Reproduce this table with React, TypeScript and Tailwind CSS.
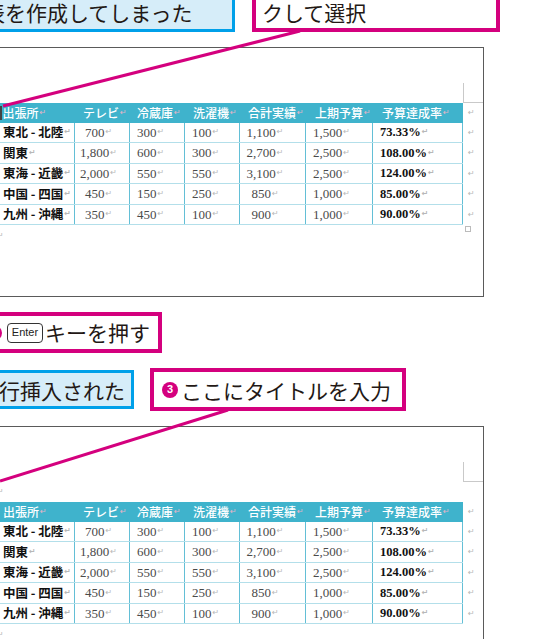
import React from "react";

const headers = ["出張所", "テレビ", "冷蔵庫", "洗濯機", "合計実績", "上期予算", "予算達成率"];
const rows = [
  ["東北 - 北陸", "700", "300", "100", "1,100", "1,500", "73.33%"],
  ["関東", "1,800", "600", "300", "2,700", "2,500", "108.00%"],
  ["東海 - 近畿", "2,000", "550", "550", "3,100", "2,500", "124.00%"],
  ["中国 - 四国", "450", "150", "250", "850", "1,000", "85.00%"],
  ["九州 - 沖縄", "350", "450", "100", "900", "1,000", "90.00%"],
];

const widths = ["w-[78px]", "w-[55px]", "w-[55px]", "w-[55px]", "w-[66px]", "w-[67px]", "w-[90px]"];
const headPad = ["pl-[6px]", "pl-[8px]", "pl-[7px]", "pl-[8px]", "pl-[8px]", "pl-[9px]", "pl-[9px]"];
const bodyPad = [
  "pl-[6px]",
  "justify-center pr-[7px]",
  "pl-[7px]",
  "pl-[7px]",
  "justify-center pr-[15px]",
  "pl-[7px]",
  "pl-[7px]",
];

function Mark({ head }: { head?: boolean }) {
  return (
    <span
      className={
        "font-['DejaVu_Sans',sans-serif] text-[8px] leading-none ml-[1px] " +
        (head ? "text-[#e6b3c6]" : "text-[#b8b8b8]")
      }
    >
      ↵
    </span>
  );
}

function Table({ cursor, handle }: { cursor?: boolean; handle?: boolean }) {
  return (
    <div className="flex flex-col">
      <div className="flex h-[20px]">
        <div className="flex w-[466px] bg-[#3fb3cc]">
          {headers.map((h, i) => (
            <div
              key={i}
              className={`${widths[i]} ${headPad[i]} flex items-center text-white text-[12px] font-medium font-['Noto_Sans_CJK_JP',sans-serif] leading-none`}
            >
              {i === 0 && cursor && <span className="inline-block w-[1.5px] h-[14px] bg-[#444] mr-[1px] -ml-[3px]" />}
              {h}
              <Mark head />
            </div>
          ))}
        </div>
        <div className="flex items-center pl-[4px]">
          <Mark />
        </div>
      </div>
      {rows.map((r, ri) => (
        <div key={ri} className="flex h-[20.5px]">
          <div className="flex w-[466px] border-b border-[#b3dfea]">
            {r.map((c, i) => (
              <div
                key={i}
                className={`${widths[i]} ${bodyPad[i]} flex items-center border-r-[1.5px] border-[#63bfd6] leading-none ${
                  i === 0
                    ? "font-['Noto_Sans_CJK_JP',sans-serif] font-bold text-[12.5px] text-[#111]"
                    : i === 6
                    ? "font-['Liberation_Serif',serif] font-bold text-[12.5px] text-[#111]"
                    : "font-['Liberation_Serif',serif] text-[13px] text-[#4a4a4a]"
                }`}
              >
                {c}
                <Mark />
              </div>
            ))}
          </div>
          <div className="flex items-center pl-[4px]">
            <Mark />
          </div>
        </div>
      ))}
      <div className="flex h-[14px] items-center">
        <div className="-ml-[1px] w-[469px]">
          <Mark />
        </div>
        {handle && <div className="w-[6px] h-[6px] border border-[#bbb] -mt-[6px]" />}
      </div>
    </div>
  );
}

function Doc({ title, cursor, handle, h }: { title?: boolean; cursor?: boolean; handle?: boolean; h: string }) {
  return (
    <div className={`ml-[-3px] w-[486.5px] ${h} border-t-[1.5px] border-r-[1.5px] border-b-[1.5px] border-[#5a5a5a] bg-white`}>
      <div className="h-[34.5px]" />
      <div className="flex justify-end pr-[0px]">
        <div className="w-[20px] h-[20px] border-l border-b border-[#c9c9c9]" />
      </div>
      {title && (
        <div className="h-[20px] flex items-center -ml-[1px]">
          <Mark />
        </div>
      )}
      <Table cursor={cursor} handle={handle} />
    </div>
  );
}

function Circle({ n }: { n: string }) {
  return (
    <span className="inline-flex items-center justify-center w-[16px] h-[16px] rounded-full bg-[#d4007e] text-white text-[11px] font-bold font-['Liberation_Sans',sans-serif] leading-none shrink-0">
      {n}
    </span>
  );
}

export default function App() {
  const label = "font-['Noto_Sans_CJK_JP',sans-serif] text-[21px] leading-none text-[#231815] whitespace-nowrap";
  return (
    <div className="relative w-[540px] h-[639px] overflow-hidden bg-white">
      {/* top callouts */}
      <div className="flex h-[32px] items-end">
        <div className={`ml-[-30px] w-[265px] h-[42px] shrink-0 border-[3px] border-[#00a0e9] bg-[#d6edf9] flex items-center pl-[11px] pt-[2px] ${label}`}>
          表を作成してしまった
        </div>
        <div className={`ml-[17px] w-[248px] h-[42px] shrink-0 border-[4px] border-[#d4007e] bg-white flex items-center pl-[6px] pt-[2px] ${label}`}>
          クして選択
        </div>
      </div>

      <div className="mt-[15px]">
        <Doc cursor handle h="h-[250px]" />
      </div>

      {/* step 2 */}
      <div className="mt-[15px] flex">
        <div className="ml-[-30px] w-[192px] h-[41px] border-[4px] border-[#d4007e] bg-white flex items-center pl-[12px]">
          <Circle n="2" />
          <span className="ml-[5px] w-[36px] h-[20px] rounded-[4px] border border-[#333] flex items-center justify-center font-['Liberation_Sans',sans-serif] text-[11px] text-[#222] leading-none">
            Enter
          </span>
          <span className={`ml-[2px] ${label}`}>キーを押す</span>
        </div>
      </div>

      {/* step 3 */}
      <div className="mt-[15px] flex items-center h-[43px]">
        <div className={`ml-[-30px] w-[164px] h-[39px] shrink-0 border-[3px] border-[#00a0e9] bg-[#d6edf9] flex items-center pl-[26px] pt-[1px] ${label}`}>
          行挿入された
        </div>
        <div className="ml-[16px] w-[256px] h-[43px] shrink-0 border-[4px] border-[#d4007e] bg-white flex items-center pl-[8px]">
          <Circle n="3" />
          <span className={`ml-[3px] pt-[1px] ${label}`}>ここにタイトルを入力</span>
        </div>
      </div>

      <div className="mt-[15px]">
        <Doc title h="h-[300px]" />
      </div>

      {/* connector lines */}
      <svg className="absolute left-0 top-0 pointer-events-none" width="540" height="639">
        <line x1="300" y1="31" x2="3" y2="106" stroke="#d4007e" strokeWidth="3" />
        <line x1="228" y1="410" x2="0" y2="481" stroke="#d4007e" strokeWidth="3" />
      </svg>
    </div>
  );
}
